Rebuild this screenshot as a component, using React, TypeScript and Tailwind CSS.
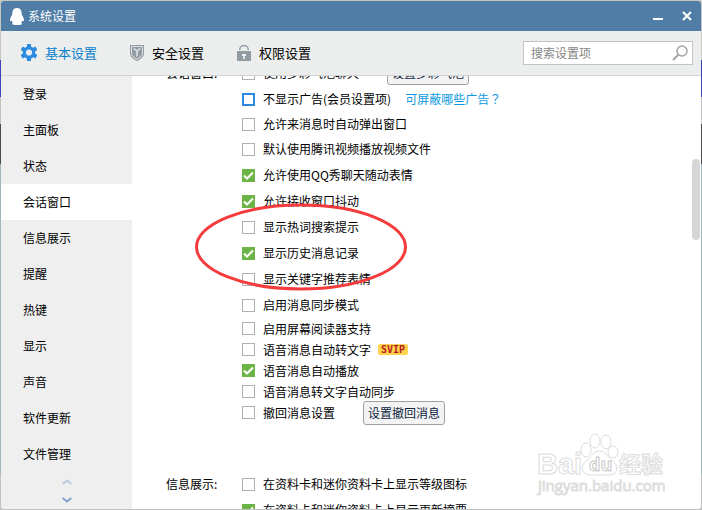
import clsx from "clsx";
import type { ReactNode } from "react";

const NAV = [
  "登录",
  "主面板",
  "状态",
  "会话窗口",
  "信息展示",
  "提醒",
  "热键",
  "显示",
  "声音",
  "软件更新",
  "文件管理",
];

type Option = {
  label: string;
  checked?: boolean;
  focused?: boolean;
  // row height class, the list is not evenly spaced
  row?: string;
  extra?: ReactNode;
};

const CHAT_OPTIONS: Option[] = [
  {
    label: "使用多彩气泡聊天",
    extra: <PushButton className="ml-7">设置多彩气泡</PushButton>,
  },
  {
    label: "不显示广告(会员设置项)",
    focused: true,
    extra: (
      <a href="#ads" className="ml-3.5 text-[#0a9ae0]">
        可屏蔽哪些广告
        <span className="font-['Noto_Sans_CJK_TC',sans-serif]">？</span>
      </a>
    ),
  },
  { label: "允许来消息时自动弹出窗口", row: "h-6" },
  { label: "默认使用腾讯视频播放视频文件" },
  { label: "允许使用QQ秀聊天随动表情", checked: true },
  { label: "允许接收窗口抖动", checked: true },
  { label: "显示热词搜索提示" },
  { label: "显示历史消息记录", checked: true },
  { label: "显示关键字推荐表情" },
  { label: "启用消息同步模式" },
  { label: "启用屏幕阅读器支持", row: "h-[21px]" },
  { label: "语音消息自动转文字", row: "h-[21px]", extra: <SvipBadge /> },
  { label: "语音消息自动播放", checked: true, row: "h-[21px]" },
  { label: "语音消息转文字自动同步", row: "h-[21px]" },
  {
    label: "撤回消息设置",
    row: "h-[21px]",
    extra: <PushButton className="ml-7">设置撤回消息</PushButton>,
  },
];

const INFO_OPTIONS: Option[] = [
  { label: "在资料卡和迷你资料卡上显示等级图标" },
  { label: "在资料卡和迷你资料卡上显示更新摘要", checked: true },
];

function PushButton({ children, className }: { children: ReactNode; className?: string }) {
  return (
    <button
      type="button"
      className={clsx(
        "h-6 shrink-0 rounded-[3px] border border-[#a0a0a0] bg-[#f3f3f3] px-1 text-[#0c2340]",
        className,
      )}
    >
      {children}
    </button>
  );
}

function SvipBadge() {
  return (
    <span className="ml-[7px] flex h-[11px] w-[30px] items-center justify-center rounded-xs bg-[#ffd34d] font-['DejaVu_Sans_Mono',monospace] text-[10px] leading-none font-bold text-[#b81c1c]">
      SVIP
    </span>
  );
}

function OptionRow({ label, checked, focused, row = "h-[26px]", extra }: Option) {
  return (
    <div className={clsx("flex items-center", row)}>
      <label className="flex items-center gap-2 whitespace-nowrap">
        <span className="relative size-[13px]">
          <input
            type="checkbox"
            defaultChecked={checked}
            className={clsx(
              "peer block size-[13px] appearance-none bg-white checked:bg-[#6cb445]",
              focused ? "border-2 border-[#2b8ae0]" : "border border-[#b0b0b0] checked:border-[#6cb445]",
            )}
          />
          <svg
            viewBox="0 0 13 13"
            className="pointer-events-none absolute inset-0 hidden size-[13px] peer-checked:block"
          >
            <path d="M2 6.5 5 9.5 11 3.5" fill="none" stroke="#fff" strokeWidth="2" />
          </svg>
        </span>
        {label}
      </label>
      {extra}
    </div>
  );
}

function OptionGroup({ title, options, className }: { title: string; options: Option[]; className?: string }) {
  return (
    <section className={clsx("flex", className)}>
      <h2 className="w-[76px] shrink-0 leading-[26px]">{title}</h2>
      <div>
        {options.map((o) => (
          <OptionRow key={o.label} {...o} />
        ))}
      </div>
    </section>
  );
}

function PenguinIcon() {
  return (
    <svg viewBox="0 0 14 17" className="h-[17px] w-3.5" fill="#fff">
      <path d="M7 0C4.200 0 2.400 2 2.400 4.600c0 1.200-.2 1.800-.7 2.900C.7 9.200 0 10.700 0 12.200c0 1 .5 1.400 1 .9l.7-.6c.2 1 .6 1.700 1.200 2.300-.6.3-.8.6-.8 1 0 .8 1 1.100 2.500 1.100H9.400c1.500 0 2.500-.3 2.500-1.100 0-.4-.2-.7-.8-1 .6-.6 1-1.300 1.200-2.300l.7.6c.5.5 1 .1 1-.9 0-1.500-.7-3-1.700-4.700-.5-1.100-.7-1.700-.7-2.900C11.600 2 9.800 0 7 0Z" />
    </svg>
  );
}

function GearIcon() {
  return (
    <svg viewBox="0 0 16 17" className="h-[17px] w-4">
      <g fill="#2b8be0">
        <rect x="6" y="0" width="4" height="17" />
        <rect x="6" y="0" width="4" height="17" transform="rotate(60 8 8.500)" />
        <rect x="6" y="0" width="4" height="17" transform="rotate(120 8 8.500)" />
        <circle cx="8" cy="8.500" r="6.300" />
      </g>
      <circle cx="8" cy="8.500" r="3.100" fill="#eceeed" />
    </svg>
  );
}

function ShieldIcon() {
  return (
    <svg viewBox="0 0 14 16" className="h-4 w-3.5">
      <path d="M0 0h14v8.500c0 3.500-4 6-7 7.500-3-1.500-7-4-7-7.500Z" fill="#949ca3" />
      <path d="M1.500 1.500h11v7c0 2.500-3 4.500-5.500 5.800-2.500-1.300-5.500-3.300-5.500-5.800Z" fill="none" stroke="#dfe2e4" />
      <path d="M3.800 3.500 7 6l3.200-2.500M7 5.500v6" fill="none" stroke="#e4e6e8" strokeWidth="1.500" />
    </svg>
  );
}

function LockIcon() {
  return (
    <svg viewBox="0 0 14 16" className="h-4 w-3.5">
      <path d="M2.800 5V4.500a4.200 4 0 0 1 8.400 0V5" fill="none" stroke="#949ca3" strokeWidth="1.500" />
      <rect y="6" width="14" height="10" rx="1" fill="#949ca3" />
      <path d="M5 9h4v2H7.800v3H6.200v-3H5Z" fill="#f2f3f3" />
    </svg>
  );
}

function Watermark() {
  return (
    <svg
      viewBox="0 0 130 64"
      className="pointer-events-none absolute right-9 bottom-3 h-16 w-[130px]"
      fill="#fff"
      stroke="#dcdcdc"
    >
      <text x="2" y="41" fontSize="29" fontWeight="bold" fontFamily="'Liberation Sans', sans-serif">
        Bai
      </text>
      <text x="84" y="39" fontSize="22" fontWeight="bold" fontFamily="'Noto Sans CJK SC', sans-serif">
        经验
      </text>
      <ellipse cx="51" cy="17" rx="5" ry="7" />
      <ellipse cx="60" cy="8" rx="5" ry="7" />
      <ellipse cx="71" cy="9" rx="5" ry="7" />
      <ellipse cx="78" cy="19" rx="5" ry="6" />
      <path d="M64.500 18c5 0 7 4 11 8 4 3 7 6 6 11-1 4-5 5-9 5h-16c-4 0-8-1-9-5-1-5 2-8 6-11 4-4 6-8 11-8Z" />
      <text x="54" y="38" fontSize="18" fontWeight="bold" fontFamily="'Open Sans', sans-serif" stroke="#c8c8c8">
        du
      </text>
      <text x="3" y="58" fontSize="15" fontFamily="'Open Sans', sans-serif">
        jingyan.baidu.com
      </text>
    </svg>
  );
}

const TABS = [
  { label: "基本设置", icon: <GearIcon />, active: true },
  { label: "安全设置", icon: <ShieldIcon /> },
  { label: "权限设置", icon: <LockIcon /> },
];

export default function App() {
  return (
    // a thin strip of the desktop shows on both sides of the window
    <div className="h-screen bg-[linear-gradient(#c6c5c0_0_60px,#3c44b8_60px_97px,#c2c2c2_97px_124px,#4c4a4c_124px_164px,#9db7bc_164px_474px,#c0c2c2_474px)] p-px font-['Noto_Sans_CJK_SC',sans-serif] text-xs text-black">
      <div className="relative flex h-full flex-col overflow-hidden rounded-[3px] bg-white">
        <header className="flex h-[30px] shrink-0 items-center bg-[#507da5] pr-[9px] pl-[9px] text-white">
          <PenguinIcon />
          <h1 className="ml-1 flex-1">系统设置</h1>
          <button type="button" aria-label="最小化" className="mr-[19px] flex h-2 w-2.5 items-end">
            <span className="h-0.5 w-full bg-white" />
          </button>
          <button type="button" aria-label="关闭" className="size-2.5">
            <svg viewBox="0 0 10 10" className="size-2.5">
              <path d="m1 1 8 8M9 1 1 9" stroke="#fff" strokeWidth="2.200" />
            </svg>
          </button>
        </header>

        <div className="flex h-[45px] shrink-0 items-center border-b border-[#d4d4d4] bg-[#eceeed] pr-2 pl-5">
          <nav className="flex flex-1 gap-[33px] text-[13px]">
            {TABS.map((t) => (
              <button
                key={t.label}
                type="button"
                className={clsx("flex items-center gap-2", t.active && "text-[#0a80cc]")}
              >
                {t.icon}
                {t.label}
              </button>
            ))}
          </nav>
          <div className="flex h-6 w-[170px] items-center border border-[#c3c5c5] bg-white pr-1 pl-[7px]">
            <input
              type="text"
              aria-label="搜索设置项"
              placeholder="搜索设置项"
              className="min-w-0 flex-1 outline-none placeholder:text-[#858585]"
            />
            <svg viewBox="0 0 16 16" className="size-4" fill="none" stroke="#a5a5a5">
              <circle cx="10" cy="6" r="5" strokeWidth="1.500" />
              <path d="M6.500 9.500 1 15" strokeWidth="2" />
            </svg>
          </div>
        </div>

        <div className="flex min-h-0 flex-1">
          <aside className="w-[131px] shrink-0 bg-[#efefef]">
            <nav>
              {NAV.map((item) => (
                <a
                  key={item}
                  href={`#${item}`}
                  className={clsx("flex h-9 items-center pl-[22px]", item === "会话窗口" && "bg-white")}
                >
                  {item}
                </a>
              ))}
            </nav>
            <div className="flex flex-col items-center gap-3 pt-[7px]">
              <button type="button" aria-label="向上">
                <svg viewBox="0 0 10 6" className="h-1.5 w-2.5">
                  <path d="M.7 5 5 1.500 9.300 5" fill="none" stroke="#b9c9e2" strokeWidth="2" />
                </svg>
              </button>
              <button type="button" aria-label="向下">
                <svg viewBox="0 0 10 6" className="h-1.5 w-2.5">
                  <path d="M.7 1 5 4.500 9.300 1" fill="none" stroke="#7ea3d0" strokeWidth="2" />
                </svg>
              </button>
            </div>
          </aside>

          <main className="relative min-w-0 flex-1 overflow-hidden pl-[34px]">
            {/* list is scrolled down a little, the first row is cut */}
            <div className="-mt-4">
              <OptionGroup title="会话窗口:" options={CHAT_OPTIONS} />
              <OptionGroup title="信息展示:" options={INFO_OPTIONS} className="mt-12" />
            </div>

            {/* hand-drawn circle round the history option */}
            <svg
              viewBox="0 0 212 88"
              className="pointer-events-none absolute top-[127px] left-[63px] h-[88px] w-[212px]"
            >
              <ellipse cx="106" cy="44" rx="104.500" ry="42" fill="none" stroke="#f53b3b" strokeWidth="3" />
            </svg>

            <div className="absolute top-[83px] right-px h-[81px] w-2 rounded-full bg-[#d6d6d6]" />
            <Watermark />
          </main>
        </div>
      </div>
    </div>
  );
}
